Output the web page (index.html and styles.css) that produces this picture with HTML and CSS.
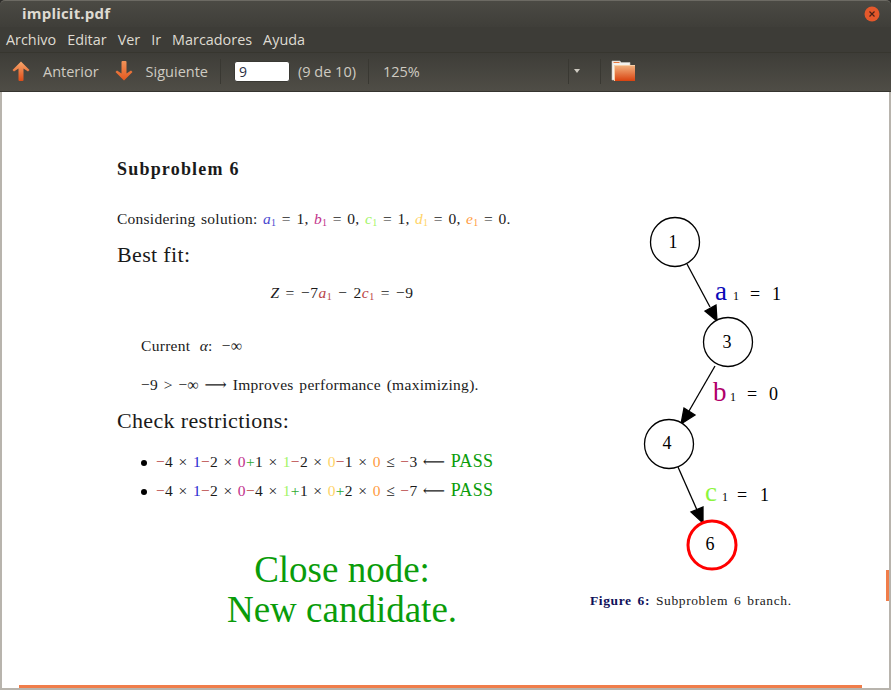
FILE: index.html
```html
<!DOCTYPE html>
<html>

<head>
	<title>implicit.pdf</title>

	<link rel="stylesheet" href="styles.css">

</head>

<body>

	<div id="window">
		<div id="titlebar">
			<span class="title">implicit.pdf</span>
			<span class="close">
				<svg width="16" height="16" viewBox="0 0 16 16">
					<circle cx="8" cy="8" r="7.5" fill="#e4582b" />
					<path d="M5.5 5.5l5 5M10.5 5.5l-5 5" stroke="#4a2116" stroke-width="1.2" />
				</svg>
			</span>
		</div>

		<div id="menubar">
			<span>Archivo</span>
			<span>Editar</span>
			<span>Ver</span>
			<span>Ir</span>
			<span>Marcadores</span>
			<span>Ayuda</span>
		</div>

		<div id="toolbar">
			<svg class="arrow" width="20" height="22" viewBox="0 0 20 22">
				<defs>
					<linearGradient id="up" x1="0" y1="0" x2="0" y2="1">
						<stop offset="0" stop-color="#f9a76c" />
						<stop offset="1" stop-color="#dd4c18" />
					</linearGradient>
					<linearGradient id="down" x1="0" y1="0" x2="0" y2="1">
						<stop offset="0" stop-color="#f29358" />
						<stop offset="1" stop-color="#e4581f" />
					</linearGradient>
					<linearGradient id="folder" x1="0" y1="0" x2="0" y2="1">
						<stop offset="0" stop-color="#f3b582" />
						<stop offset="1" stop-color="#d9420f" />
					</linearGradient>
				</defs>
				<path d="M10 1.500l8.500 8.500-1.500 1.500-4.500-3V20a1 1 0 0 1-1 1H8.500a1 1 0 0 1-1-1V8.500l-4.500 3L1.500 10z" fill="url(#up)" />
			</svg>
			<span class="label first">Anterior</span>
			<svg class="arrow" width="20" height="22" viewBox="0 0 20 22">
				<path d="M10 20.500l8.500-8.500-1.500-1.500-4.500 3V2a1 1 0 0 0-1-1H8.500a1 1 0 0 0-1 1v11.500l-4.500-3L1.500 12z" fill="url(#down)" />
			</svg>
			<span class="label">Siguiente</span>
			<span class="sep sep1"></span>
			<input class="page" type="text" value="9">
			<span class="label count">(9 de 10)</span>
			<span class="sep sep2"></span>
			<span class="label zoom">125%</span>
			<span class="sep"></span>
			<span class="caret"></span>
			<span class="sep"></span>
			<svg class="open" width="26" height="22" viewBox="0 0 26 22">
				<path d="M1 1h8l1 1.500h9V20H1z" fill="#f4f2ee" stroke="#c9c5bd" stroke-width=".6" />
				<path d="M2.500 2.500h6" stroke="#e8763a" />
				<rect x="3" y="5" width="21" height="16" fill="url(#folder)" />
				<path d="M3 5h21v1H4v15H3z" fill="#f8cfa8" />
			</svg>
		</div>

		<div id="viewer">
			<div class="pdf-left">
				<h2>Subproblem 6</h2>
				<p class="solution">Considering solution: <i class="ca">a<sub>1</sub></i> = 1, <i class="cb">b<sub>1</sub></i> = 0, <i class="cc">c<sub>1</sub></i> = 1, <i class="cd">d<sub>1</sub></i> = 0, <i class="ce">e<sub>1</sub></i> = 0.</p>
				<h3 class="fit">Best fit:</h3>
				<p class="formula"><i>Z</i> = −7<i class="cr">a<sub>1</sub></i> − 2<i class="cr">c<sub>1</sub></i> = −9</p>
				<p class="current">Current <i>α</i>: −∞</p>
				<p class="improves">−9 &gt; −∞ ⟶ Improves performance (maximizing).</p>
				<h3 class="check">Check restrictions:</h3>
				<ul>
					<li><span class="cr">−</span>4 × <span class="n1">1</span><span class="cr">−</span>2 × <span class="cb">0</span><span class="cg">+</span>1 × <span class="cc">1</span><span class="cr">−</span>2 × <span class="cd">0</span><span class="cr">−</span>1 × <span class="ce">0</span> ≤ <span class="cr">−</span>3 ⟵ <span class="pass">PASS</span></li>
					<li><span class="cr">−</span>4 × <span class="n1">1</span><span class="cr">−</span>2 × <span class="cb">0</span><span class="cr">−</span>4 × <span class="cc">1</span><span class="cg">+</span>1 × <span class="cd">0</span><span class="cg">+</span>2 × <span class="ce">0</span> ≤ <span class="cr">−</span>7 ⟵ <span class="pass">PASS</span></li>
				</ul>
				<p class="verdict">Close node:<br>New candidate.</p>
			</div>

			<div class="pdf-right">
				<svg class="graph" width="260" height="375" viewBox="570 205 260 375">
					<g fill="#000" stroke="#000" stroke-width="1.300">
						<path d="M687 264L710 307" />
						<path d="M717 321L705 311L716 305z" />
						<path d="M715 366L689 411" />
						<path d="M681 424L684 408L695 415z" />
						<path d="M678 467L697 510" />
						<path d="M703 523L691 512L703 507z" />
					</g>
					<g class="node">
						<circle cx="675" cy="242" r="24.500" />
						<circle cx="728" cy="342" r="24.500" />
						<circle cx="669" cy="444" r="24.500" />
						<circle class="red" cx="712" cy="545" r="24" />
					</g>
					<g class="nums" text-anchor="middle">
						<text x="673" y="248">1</text>
						<text x="727" y="348">3</text>
						<text x="667" y="449">4</text>
						<text x="710" y="550">6</text>
					</g>
					<g class="edge">
						<text class="big ca2" x="715" y="300">a</text>
						<text class="tiny" x="733" y="300">1</text>
						<text x="750" y="300">=</text>
						<text x="772" y="300">1</text>
						<text class="big cb2" x="713" y="401">b</text>
						<text class="tiny" x="730" y="401">1</text>
						<text x="747" y="400">=</text>
						<text x="769" y="400">0</text>
						<text class="big cc2" x="705" y="501">c</text>
						<text class="tiny" x="722" y="501">1</text>
						<text x="737" y="501">=</text>
						<text x="760" y="501">1</text>
					</g>
				</svg>
				<p class="caption"><b>Figure 6:</b> Subproblem 6 branch.</p>
			</div>

			<div class="vscroll"></div>
			<div class="hscroll"></div>
		</div>
	</div>

</body>

</html>
```

FILE: styles.css
```css
html, body {
	margin: 0;
	height: 100%;
}

body {
	font-family: "Open Sans", "Noto Sans", sans-serif;
	background: #2e2d2a;
	overflow: hidden;
}

#window {
	height: 690px;
	display: flex;
	flex-direction: column;
}

#titlebar {
	height: 26px;
	flex: none;
	display: flex;
	align-items: center;
	justify-content: space-between;
	padding: 0 11px 0 22px;
	background-image: linear-gradient(#4b4a44, #3f3e39);
	border-top: 1px solid #6c6a63;
	border-radius: 5px 5px 0 0;
	color: #dfdbd2;
}

.title {
	margin-bottom: 3px;
	font-weight: 700;
	font-size: 15px;
	letter-spacing: .2px;
}

.close {
	display: flex;
}

#menubar {
	height: 25px;
	flex: none;
	display: flex;
	align-items: center;
	gap: 11px;
	padding: 0 6px;
	background: #3d3c37;
	border-bottom: 1px solid #37362f;
	color: #dfdbd2;
	font-size: 14.400px;
}

#toolbar {
	height: 36px;
	flex: none;
	display: flex;
	align-items: center;
	padding: 0 0 2px 11px;
	background-image: linear-gradient(#3e3d38, #4f4d46);
	border-bottom: 1px solid #35342f;
	color: #cfcbc2;
	font-size: 14.500px;
}

.label {
	margin-left: 12px;
}

.label.first {
	margin-right: 15px;
}

.sep {
	width: 1px;
	height: 25px;
	background: #393832;
}

.sep1 {
	margin: 0 13px 0 12px;
}

.page {
	box-sizing: border-box;
	width: 56px;
	height: 21px;
	padding: 0 4px;
	border: 1px solid #3a3934;
	border-radius: 3px;
	background: #fff;
	font: 14px "Open Sans", sans-serif;
	color: #2c3144;
}

.count {
	margin-left: 8px;
}

.sep2 {
	margin-left: 12px;
}

.zoom {
	margin-left: 14px;
	width: 185px;
}

.caret {
	width: 0;
	height: 0;
	border-left: 3px solid transparent;
	border-right: 3px solid transparent;
	border-top: 4px solid #cfcbc2;
	margin: 0 20px 0 5px;
}

.open {
	margin-left: 10px;
}

#viewer {
	flex: 1;
	position: relative;
	display: flex;
	box-sizing: border-box;
	background: #fff;
	border: 2px solid #b8b4ad;
	border-top: 0;
	color: #1a1a1a;
	font-family: "Liberation Serif", "DejaVu Serif", serif;
}

.pdf-left {
	width: 450px;
	margin-left: 115px;
	padding-top: 67px;
}

h2 {
	margin: 0;
	font-size: 18px;
	line-height: 20px;
	letter-spacing: 1.200px;
}

h3 {
	margin: 0;
	font-weight: normal;
	font-size: 22px;
	line-height: 26px;
	letter-spacing: .35px;
}

p {
	margin: 0;
}

.solution {
	margin-top: 30px;
	font-size: 15.500px;
	line-height: 20px;
	letter-spacing: .25px;
	word-spacing: 1.400px;
}

.fit {
	margin-top: 13px;
}

.formula {
	margin-top: 15px;
	text-align: center;
	font-size: 15.500px;
	line-height: 20px;
	letter-spacing: .5px;
	word-spacing: 1.700px;
}

.current {
	margin: 33px 0 0 24px;
	font-size: 15.500px;
	line-height: 20px;
	letter-spacing: .3px;
	word-spacing: 5px;
}

.improves {
	margin: 19px 0 0 24px;
	font-size: 15.500px;
	line-height: 20px;
	letter-spacing: .3px;
	word-spacing: 1.500px;
}

.check {
	margin-top: 13px;
}

ul {
	margin: 13px 0 0;
	padding: 0 0 0 39px;
	list-style: none;
	font-size: 15.500px;
	letter-spacing: .3px;
	word-spacing: 1.200px;
}

li {
	height: 29px;
	line-height: 29px;
	white-space: nowrap;
}

li::before {
	content: "";
	display: inline-block;
	width: 6px;
	height: 6px;
	margin: 0 9px 1px -15px;
	border-radius: 50%;
	background: #000;
}

sub {
	font-size: 10px;
	font-style: normal;
	line-height: 0;
	vertical-align: -2px;
}

.verdict {
	margin-top: 45px;
	text-align: center;
	color: #0a9c0a;
	font-size: 37px;
	line-height: 40px;
}

.pass {
	color: #0a9c0a;
	font-size: 18px;
}

.ca { color: #4a4ad0; }
.cb { color: #c2338c; }
.cc { color: #a4f46a; }
.cd { color: #ffd468; }
.ce { color: #ff9c42; }
.cr { color: #b84444; }
.cg { color: #2faa2f; }
.n1 { color: #2a2ad0; }

.pdf-right {
	width: 260px;
	margin-left: 3px;
	padding-top: 113px;
}

.graph {
	display: block;
}

.node circle {
	fill: #fff;
	stroke: #000;
	stroke-width: 1.300;
}

.node .red {
	stroke: #f00;
	stroke-width: 3;
}

.nums {
	font-size: 18px;
}

.edge {
	font-size: 18px;
}

.edge .big {
	font-size: 27px;
}

.edge .tiny {
	font-size: 12px;
}

.ca2 { fill: #0a0ab8; }
.cb2 { fill: #b0006a; }
.cc2 { fill: #8cf53c; }

.caption {
	margin: 13px 0 0 20px;
	font-size: 13.500px;
	line-height: 15px;
	letter-spacing: .6px;
	word-spacing: 2px;
	white-space: nowrap;
}

.caption b {
	color: #10105a;
}

.vscroll {
	position: absolute;
	right: 0;
	top: 478px;
	width: 3px;
	height: 31px;
	background: #f07d4a;
}

.hscroll {
	position: absolute;
	left: 17px;
	bottom: 0;
	width: 843px;
	height: 3px;
	background: #f07d4a;
}
```
